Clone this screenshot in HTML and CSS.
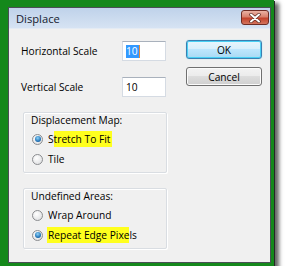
FILE: index.html
```html
<!DOCTYPE html>
<html lang="en">

<head>
    <meta charset="UTF-8">
    <meta name="viewport" content="width=device-width, initial-scale=1.0">
    <title>Displace</title>
    <link rel="stylesheet" href="styles.css">
</head>

<body>
    <div class="frame">
        <div class="dialog">
            <div class="title-bar">
                <span class="title">Displace</span>
                <span class="close">
                    <svg width="14" height="10" viewBox="0 0 14 10">
                        <path d="M3 1.5 L11 8.5 M11 1.5 L3 8.5" stroke="#5a2a22" stroke-width="3.4" stroke-linecap="round"/>
                        <path d="M3 1.5 L11 8.5 M11 1.5 L3 8.5" stroke="#ffffff" stroke-width="2" stroke-linecap="round"/>
                    </svg>
                </span>
            </div>
            <div class="content">
                <div class="fields">
                    <div class="row">
                        <span class="label">Horizontal Scale</span>
                        <div class="textbox"><span class="sel">10</span></div>
                    </div>
                    <div class="row">
                        <span class="label">Vertical Scale</span>
                        <div class="textbox">10</div>
                    </div>
                    <div class="group">
                        <div class="group-label">Displacement Map:</div>
                        <div class="option"><span class="radio checked"></span><span>S<span class="hl">tretch To Fit</span></span></div>
                        <div class="option"><span class="radio"></span><span>Tile</span></div>
                    </div>
                    <div class="group">
                        <div class="group-label">Undefined Areas:</div>
                        <div class="option"><span class="radio"></span><span>Wrap Around</span></div>
                        <div class="option"><span class="radio checked"></span><span><span class="hl first">Repeat Edge Pixe</span>ls</span></div>
                    </div>
                </div>
                <div class="buttons">
                    <button class="btn default">OK</button>
                    <button class="btn">Cancel</button>
                </div>
            </div>
        </div>
    </div>
</body>

</html>
```

FILE: styles.css
```css
* {
    margin: 0;
    padding: 0;
    box-sizing: border-box;
    font-family: 'Open Sans', 'Noto Sans', sans-serif;
}

body {
    background: #ffffff;
}

.frame {
    display: flex;
    width: 274px;
    border: solid #14881b;
    border-width: 7px 3px 3px 8px;
    box-shadow: 1px 1px 0 #262626, 4px 4px 4px 1px rgba(0, 0, 0, 0.6);
}

.dialog {
    width: 263px;
    height: 256px;
    border: 1px solid #4a4e55;
    background: #f0f0f0;
    display: flex;
    flex-direction: column;
}

.title-bar {
    height: 22px;
    display: flex;
    align-items: flex-start;
    padding: 2px 1px 0 7px;
    background: linear-gradient(#bfd2ea, #d6e3f3);
}

.title {
    font-size: 11.2px;
    line-height: 18px;
    color: #15202e;
}

.close {
    margin-left: auto;
    width: 28px;
    height: 15px;
    border: 1px solid #6e2c24;
    border-radius: 3px;
    background: linear-gradient(#eab2a4, #d8806c 45%, #c2422b 55%, #d4745d);
    display: flex;
    align-items: center;
    justify-content: center;
}

.content {
    flex: 1;
    display: flex;
    gap: 19px;
    padding: 11px 8px 0 12px;
    border-top: 1px solid #e4ebf4;
}

.fields {
    width: 146px;
    margin-top: 1px;
    display: flex;
    flex-direction: column;
}

.row {
    display: flex;
    align-items: center;
    height: 20px;
    margin-bottom: 16px;
}

.row + .row {
    margin-bottom: 15px;
}

.label,
.option,
.group-label,
.btn,
.textbox {
    font-size: 10.2px;
    color: #000;
}

.label {
    width: 101px;
}

.textbox {
    width: 44px;
    height: 20px;
    background: #fff;
    border: 1px solid #d5dbe3;
    border-top-color: #a9b1bc;
    padding-left: 3px;
    display: flex;
    align-items: center;
}

.sel {
    background: #3399ff;
    color: #fff;
    line-height: 13px;
    padding-right: 1px;
    border-right: 1px solid #e58a3a;
}

.group {
    margin-left: 2px;
    width: 144px;
    height: 61px;
    border: 1px solid #d9dde2;
    box-shadow: inset 1px 1px 0 #fff, 1px 1px 0 #fff;
    border-radius: 2px;
    padding: 0 0 0 7px;
    margin-bottom: 15px;
}

.group-label {
    line-height: 14px;
    margin-bottom: 2px;
}

.option {
    display: flex;
    align-items: center;
    gap: 5px;
    height: 20px;
    padding-left: 1px;
}

.radio {
    width: 11px;
    height: 11px;
    border-radius: 50%;
    border: 1px solid #8b8d90;
    background: radial-gradient(circle at 40% 35%, #ffffff, #d9dadc);
    display: flex;
    align-items: center;
    justify-content: center;
}

.radio.checked::after {
    content: '';
    width: 6px;
    height: 6px;
    border-radius: 50%;
    background: radial-gradient(circle at 45% 35%, #8fd3f7, #1e70b5 65%, #11406e);
}

.hl {
    background: #ffff1e;
    padding: 1px 2px 1px 0;
}

.hl.first {
    padding: 1px 0 1px 1px;
    margin-left: -1px;
}

.buttons {
    width: 76px;
    display: flex;
    flex-direction: column;
    gap: 8px;
}

.btn {
    height: 19px;
    border: 1px solid #707070;
    border-radius: 3px;
    background: linear-gradient(#f3f3f3, #ebebeb 50%, #dddddd 50%, #cfcfcf);
    box-shadow: inset 0 0 0 1px #fbfbfb;
}

.btn.default {
    border-color: #3c7fb1;
    background: linear-gradient(#e7f6fd, #d7effc 50%, #bde6fd 50%, #a8d9f4);
    box-shadow: inset 0 0 0 1px #48d0f4, 0 0 1px #5fd6f7;
}
```
